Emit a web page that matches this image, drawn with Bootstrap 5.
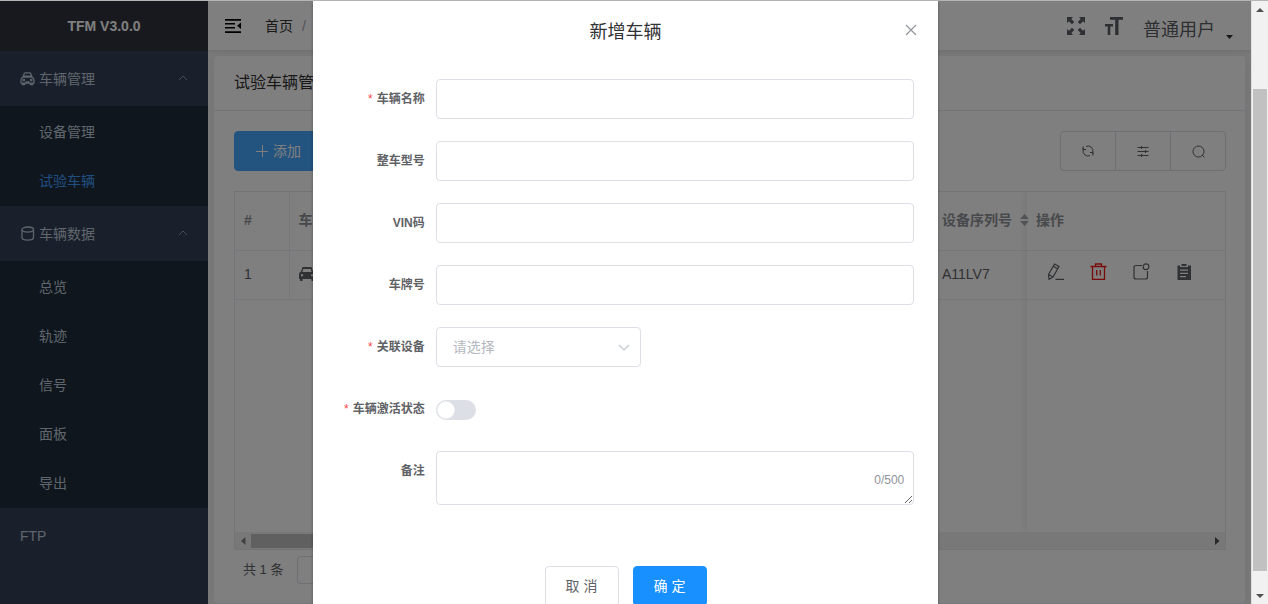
<!DOCTYPE html>
<html lang="zh-CN">
<head>
<meta charset="utf-8">
<meta name="viewport" content="width=device-width, initial-scale=1">
<title>TFM V3.0.0</title>
<link href="https://cdn.jsdelivr.net/npm/bootstrap@5.3.0/dist/css/bootstrap.min.css" rel="stylesheet">
<style>
  body { font-family: "Liberation Sans", "Noto Sans CJK SC", sans-serif; font-size: 14px; line-height: 20px; color: #606266; border-top: 1px solid #b4b4b4; overflow: hidden; }
  svg { display: block; flex: none; }
  a { color: inherit; text-decoration: none; }

  /* sidebar */
  .side { width: 208px; background: #344056; color: #bfcbd9; }
  .side-logo { height: 50px; background: #31333d; color: #fff; }
  .side-top { height: 55px; padding: 0 20px; gap: 4px; width: 100%; }
  .side-sub { background: #202d3b; padding: 1px 0; }
  .side-sub a { height: 49px; padding-left: 39px; }
  .side-sub a.current { color: #409eff; }
  .side-arrow { color: #8f99a8; }

  /* top bar */
  .topbar { height: 49px; padding: 0 16px 0 17px; box-shadow: 0 1px 4px rgba(0,21,41,.12); background: #fff; color: #303133; z-index: 1; }
  .crumbs { margin-left: 24px; --bs-breadcrumb-divider-color: #a0a4ab; --bs-breadcrumb-item-padding-x: 9px; }
  .who { font-size: 18px; color: #5a5e66; margin-left: 20px; padding-top: 8px; }

  /* content card */
  .content { background: #f4f4f4; padding: 5px 5px 0; }
  .panel { background: #fff; border: 1px solid #ebeef5; border-radius: 4px; box-shadow: 0 2px 12px rgba(0,0,0,.06); height: 100%; }
  .panel-title { height: 55px; padding: 0 20px; border-bottom: 1px solid #e6e8ee; font-size: 16px; color: #303133; }
  .panel-main { padding: 20px 19px 0 20px; }
  .btn-add { --bs-btn-bg: #46a6ff; --bs-btn-color: #fff; --bs-btn-border-color: #46a6ff; font-size: 14px; height: 40px; padding: 0 20px; border-radius: 4px; }
  .tools { height: 40px; }
  .tools .btn { width: 56px; --bs-btn-border-color: #dcdfe6; --bs-btn-color: #606266; --bs-btn-border-radius: 4px; padding: 0; }

  /* data grid */
  .grid-box { margin-top: 20px; border: 1px solid #e6e8ee; color: #606266; }
  .grid-rows { height: 340px; overflow: hidden; }
  .grid { table-layout: fixed; margin: 0; width: 100%; white-space: nowrap; }
  .grid th, .grid td { padding: 0 10px 2px 9px; border-bottom: 1px solid #ebeef5; }
  .grid th { height: 58px; color: #909399; }
  .grid td { height: 49px; }
  .grid .ruled { border-right: 1px solid #ebeef5; }
  .col-serial { width: 94px; }
  .col-no { width: 54px; }
  .fixed-part { width: 198px; box-shadow: 0 0 10px rgba(0,0,0,.1); }
  .fixed-part .acts { gap: 26px; padding: 0 0 4px 11px; color: #606266; }
  .acts button { color: inherit; }
  .acts .del { color: #f01414; }
  .hbar { height: 17px; background: #f1f1f1; color: #505050; padding: 0 5px 0 6px; }
  .hthumb { width: 60%; height: 14px; background: #c1c1c1; margin-left: 5px; }
  .pager { padding: 6px 9px; color: #606266; font-size: 13px; }
  .pager select { height: 28px; width: 100px; border: 1px solid #dcdfe6; border-radius: 3px; background: #fff; margin-left: 14px; padding-left: 20px; color: #606266; font-size: 13px; }

  /* dialog */
  .shade { background: rgba(0,0,0,.5); z-index: 10; overflow: hidden; }
  .dlg { width: 50%; background: #fff; box-shadow: 0 1px 3px rgba(0,0,0,.3); padding: 0 24px 40px; min-height: 100%; }
  .dlg-head { height: 62px; font-size: 18px; color: #303133; }
  .dlg-close { right: -3px; top: 23px; color: #909399; }
  .dlg form { padding-top: 16px; }
  .line { margin-bottom: 22px; min-height: 40px; }
  .line-label { width: 99px; padding-right: 11px; font-size: 12px; font-weight: 700; line-height: 40px; text-align: right; white-space: nowrap; flex: none; }
  .need::before { content: "*"; color: #ff4949; margin-right: 4px; font-weight: 400; }
  .dlg .form-control, .dlg .form-select { border: 1px solid #dcdfe6; border-radius: 4px; font-size: 14px; height: 40px; padding: 0 16px; box-shadow: none; }
  .dlg .form-select { width: 205px; color: #b4b8c0; background-position: right 9px center; background-size: 14px 14px;
    background-image: url("data:image/svg+xml,%3Csvg xmlns='http://www.w3.org/2000/svg' viewBox='0 0 14 14'%3E%3Cpath d='M2 5l5 5 5-5' fill='none' stroke='%23c0c4cc' stroke-width='1.2'/%3E%3C/svg%3E"); }
  .dlg textarea.form-control { height: 54px; min-height: 54px; }
  .flip { appearance: none; width: 40px; height: 20px; border-radius: 10px; margin: 11px 0 0; border: 0; background: radial-gradient(circle at 10px 10px, #fff 8px, #dcdfe6 9px); }
  .flip:checked { background: radial-gradient(circle at 30px 10px, #fff 8px, #1890ff 9px); }
  .count { right: 10px; bottom: 19px; font-size: 12px; color: #909399; }
  .dlg-foot { padding-top: 39px; gap: 14px; }
  .dlg-foot .btn { width: 74px; height: 40px; padding: 0; font-size: 14px; border-radius: 4px; --bs-btn-border-color: #dcdfe6; --bs-btn-color: #606266; }
  .dlg-foot .btn-ok { --bs-btn-bg: #1890ff; --bs-btn-border-color: #1890ff; --bs-btn-color: #fff; }

  /* page scroll bar */
  .vbar { width: 17px; background: #f1f1f1; color: #505050; border-left: 1px solid #e0e0e0; padding: 0 1px; }
  .vbar-end { height: 17px; }
  .vthumb { background: #c1c1c1; flex: 482; }
</style>
</head>
<body class="d-flex vh-100">
<div class="d-flex flex-grow-1 position-relative overflow-hidden">

  <nav class="side d-flex flex-column flex-shrink-0">
    <div class="side-logo d-flex align-items-center justify-content-center fw-bold">TFM V3.0.0</div>
    <a href="#" class="side-top d-flex align-items-center">
      <svg width="15" height="15" viewBox="0 0 16 16" fill="none" stroke="currentColor" stroke-width="1.3"><path d="M3 6.5L4.600 2.600Q5 2 5.700 2h4.600q.7 0 1.100.6L13 6.500M4 5.500h8M3 6.500h10q2 1 2 3.500v2.500q0 .5-.5.5h-13q-.5 0-.5-.5V10q0-2.500 2-3.500zM2.500 13v1.500h2.500V13M11 13v1.500h2.500V13M6 11.500h4"/><circle cx="4" cy="9.700" r=".9"/><circle cx="12" cy="9.700" r=".9"/></svg>
      <span class="flex-grow-1">车辆管理</span>
      <svg class="side-arrow" width="10" height="10" viewBox="0 0 10 10" fill="none" stroke="currentColor"><path d="M1 6l4-4 4 4"/></svg>
    </a>
    <div class="side-sub">
      <a href="#" class="d-flex align-items-center">设备管理</a>
      <a href="#" class="current d-flex align-items-center">试验车辆</a>
    </div>
    <a href="#" class="side-top d-flex align-items-center">
      <svg width="15" height="15" viewBox="0 0 15 15" fill="none" stroke="currentColor" stroke-width="1.300"><path d="M2 4v7.500c0 3.400 11.500 3.400 11.500 0V4"/><ellipse cx="7.750" cy="3.600" rx="5.750" ry="2.600"/></svg>
      <span class="flex-grow-1">车辆数据</span>
      <svg class="side-arrow" width="10" height="10" viewBox="0 0 10 10" fill="none" stroke="currentColor"><path d="M1 6l4-4 4 4"/></svg>
    </a>
    <div class="side-sub">
      <a href="#" class="d-flex align-items-center">总览</a>
      <a href="#" class="d-flex align-items-center">轨迹</a>
      <a href="#" class="d-flex align-items-center">信号</a>
      <a href="#" class="d-flex align-items-center">面板</a>
      <a href="#" class="d-flex align-items-center">导出</a>
    </div>
    <a href="#" class="side-top d-flex align-items-center">FTP</a>
  </nav>

  <div class="d-flex flex-column flex-grow-1 overflow-hidden">
    <header class="topbar d-flex align-items-center flex-shrink-0 position-relative">
      <svg width="16" height="16" viewBox="0 0 16 16" fill="#000"><path d="M0 1h16v1.700H0zM0 5h10v1.500H0zM0 9h10v1.500H0zM0 13.300h16V15H0zM16 4.500v6.500L12 7.800z"/></svg>
      <ol class="breadcrumb crumbs mb-0">
        <li class="breadcrumb-item">首页</li>
        <li class="breadcrumb-item">车辆管理</li>
      </ol>
      <button type="button" class="btn p-0 border-0 ms-auto" aria-label="全屏">
        <svg width="18" height="18" viewBox="0 0 18 18" fill="#5a5e66"><path d="M0 0h6L4.300 1.900 7.300 4.900 5 7.200 1.900 4.200 0 6zM18 0v6l-1.900-1.800L13 7.200 10.700 4.900l3-3L12 0zM0 18v-6l1.900 1.800L5 10.800l2.300 2.300-3 3L6 18zM18 18h-6l1.700-1.900-3-3 2.300-2.300 3.100 3L18 12z"/></svg>
      </button>
      <button type="button" class="btn p-0 border-0 ms-3" aria-label="字号">
        <svg width="22" height="18" viewBox="-4 0 22 18" fill="#5a5e66"><path d="M5 0h13v2.800h-4.500V18h-3.300V2.800H5zM0 7h8v2.500H5.300V18H2.700V9.500H0z"/></svg>
      </button>
      <span class="who">普通用户</span>
      <svg class="ms-2 mt-4" width="12" height="8" viewBox="0 0 12 8" fill="#303133"><path d="M3 1h7L6.500 5z"/></svg>
    </header>

    <main class="content flex-grow-1">
      <section class="panel">
        <div class="panel-title d-flex align-items-center">试验车辆管理</div>
        <div class="panel-main">
          <div class="d-flex justify-content-between">
            <button type="button" class="btn btn-add d-flex align-items-center"><svg width="14" height="14" viewBox="0 0 14 14" stroke="#fff"><path d="M1 7.500h12M7.500 1v12"/></svg>&nbsp;添加</button>
            <div class="btn-group tools">
              <button type="button" class="btn d-flex align-items-center justify-content-center" aria-label="刷新"><svg width="12" height="12" viewBox="0 0 12 12" fill="none" stroke="currentColor"><path d="M4 1.400A5 5 0 0 1 10.900 7M10.900 9V6.800M8 10.600A5 5 0 0 1 1.100 5M1.100 3V5.200M1.100 1.500v3H4M10.900 10.500v-3H8"/></svg></button>
              <button type="button" class="btn d-flex align-items-center justify-content-center" aria-label="列设置"><svg width="12" height="12" viewBox="0 0 12 12" fill="none" stroke="currentColor"><path d="M.5 2.500h11M.5 6.500h11M.5 10.500h11M4.500 1v3M8.500 5v3M4.500 9v3"/></svg></button>
              <button type="button" class="btn d-flex align-items-center justify-content-center" aria-label="搜索"><svg width="13" height="13" viewBox="0 0 13 13" fill="none" stroke="currentColor"><circle cx="6.500" cy="6.500" r="5.500"/><path d="M10 10l2.300 2.300"/></svg></button>
            </div>
          </div>

          <div class="grid-box">
            <div class="grid-rows d-flex">
              <div class="flex-grow-1">
                <table class="grid">
                  <colgroup><col class="col-no"><col><col class="col-serial"></colgroup>
                  <thead><tr><th class="ruled">#</th><th>车辆名称</th><th><span class="d-flex align-items-center">设备序列号<svg class="ms-2" width="9" height="14" viewBox="0 0 9 14" fill="#a8abb2"><path d="M0 6l4.500-5L9 6zM0 8h9l-4.500 5z"/></svg></span></th></tr></thead>
                  <tbody><tr><td class="ruled">1</td><td><svg width="16" height="14" viewBox="0 0 16 14" fill="#606266"><path fill-rule="evenodd" d="M3.500 0h9L14 4.500q2 .8 2 3V12h-1v2h-2.500v-2h-9v2H1v-2H0V7.500q0-2.200 2-3zM4.300 2l-1 3h9.400l-1-3zM3 7a1.200 1.200 0 1 0 .1 0zM13 7a1.200 1.200 0 1 0 .1 0z"/></svg></td><td>A11LV7</td></tr></tbody>
                </table>
              </div>
              <div class="fixed-part flex-shrink-0">
                <table class="grid">
                  <thead><tr><th>操作</th></tr></thead>
                  <tbody><tr><td><div class="acts d-flex">
                    <button type="button" class="btn p-0 border-0" aria-label="编辑"><svg width="17" height="17" viewBox="0 0 17 17" fill="none" stroke="currentColor" stroke-width="1.200"><path d="M1.500 11.500L7.500 1l4.500 2.500L6 14l-4 2.300zM6.300 3.300l4.500 2.500M1.500 11.500L6 14M8.500 16.300H17"/></svg></button>
                    <button type="button" class="btn p-0 border-0 del" aria-label="删除"><svg width="17" height="17" viewBox="0 0 17 17" fill="none" stroke="currentColor" stroke-width="1.300"><path d="M.5 3.500h16M2.500 3.500v12.800h12V3.500M5.500 3.300V1h6v2.300M6.700 7v5.500M10.300 7v5.500"/></svg></button>
                    <button type="button" class="btn p-0 border-0" aria-label="标记"><svg width="17" height="17" viewBox="0 0 17 17" fill="none" stroke="currentColor" stroke-width="1.200"><path d="M9 2.500H3Q1 2.500 1 4.500v9.500q0 2 2 2h9.500q2 0 2-2V8"/><circle cx="13" cy="3.800" r="2.900"/></svg></button>
                    <button type="button" class="btn p-0 border-0" aria-label="记录"><svg width="17" height="17" viewBox="0 0 17 17" fill="currentColor"><path fill-rule="evenodd" d="M1.500 2.500H4V4h8V2.500h3V17h-13.500zM5.500 1h5v2h-5zM4 6.500v1.200h8V6.500zM4 9.800V11h8V9.800zM4 13v1.200h6V13z"/></svg></button>
                  </div></td></tr></tbody>
                </table>
              </div>
            </div>
            <div class="hbar d-flex align-items-center">
              <svg width="5" height="8" viewBox="0 0 5 8" fill="#808080"><path d="M4.500 0v8L0 4z"/></svg>
              <div class="hthumb"></div>
              <svg class="ms-auto" width="5" height="8" viewBox="0 0 5 8" fill="currentColor"><path d="M0 0v8l4.500-4z"/></svg>
            </div>
          </div>
          <div class="pager d-flex align-items-center"><span>共 1 条</span><select aria-label="每页条数"><option>20条/页</option></select></div>
        </div>
      </section>
    </main>
  </div>

  <div class="shade position-absolute top-0 start-0 w-100 h-100 d-flex justify-content-center">
    <div class="dlg" role="dialog" aria-labelledby="dlg-title">
      <div class="dlg-head position-relative d-flex align-items-center justify-content-center">
        <span id="dlg-title">新增车辆</span>
        <button type="button" class="btn p-0 border-0 position-absolute dlg-close" aria-label="关闭"><svg width="12" height="12" viewBox="0 0 12 12" fill="none" stroke="#909399" stroke-width="1.100"><path d="M1 1l10 10M11 1L1 11"/></svg></button>
      </div>
      <form>
        <div class="line d-flex"><label class="line-label need" for="f-name">车辆名称</label><input class="form-control" id="f-name" type="text"></div>
        <div class="line d-flex"><label class="line-label" for="f-model">整车型号</label><input class="form-control" id="f-model" type="text"></div>
        <div class="line d-flex"><label class="line-label" for="f-vin">VIN码</label><input class="form-control" id="f-vin" type="text"></div>
        <div class="line d-flex"><label class="line-label" for="f-plate">车牌号</label><input class="form-control" id="f-plate" type="text"></div>
        <div class="line d-flex"><label class="line-label need" for="f-device">关联设备</label><select class="form-select" id="f-device"><option>请选择</option></select></div>
        <div class="line d-flex"><label class="line-label need" for="f-active">车辆激活状态</label><input class="flip" id="f-active" type="checkbox" role="switch"></div>
        <div class="line d-flex"><label class="line-label" for="f-note">备注</label>
          <div class="flex-grow-1 position-relative"><textarea class="form-control" id="f-note" maxlength="500"></textarea><span class="count position-absolute lh-1">0/500</span></div></div>
        <div class="dlg-foot d-flex justify-content-center">
          <button type="button" class="btn">取 消</button>
          <button type="submit" class="btn btn-ok">确 定</button>
        </div>
      </form>
    </div>
  </div>
</div>

<div class="vbar d-flex flex-column flex-shrink-0" aria-hidden="true">
  <div class="vbar-end d-flex align-items-center justify-content-center"><svg width="8" height="4" viewBox="0 0 8 4" fill="currentColor"><path d="M0 4h8L4 0z"/></svg></div>
  <div style="flex:71"></div>
  <div class="vthumb"></div>
  <div style="flex:16"></div>
  <div class="vbar-end d-flex align-items-center justify-content-center"><svg width="8" height="4" viewBox="0 0 8 4" fill="currentColor"><path d="M0 0h8L4 4z"/></svg></div>
</div>
<script src="https://cdn.jsdelivr.net/npm/bootstrap@5.3.0/dist/js/bootstrap.bundle.min.js"></script>
</body>
</html>
